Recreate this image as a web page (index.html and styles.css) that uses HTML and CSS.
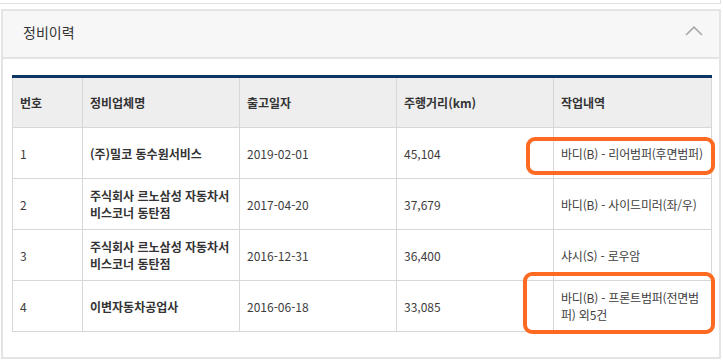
FILE: index.html
```html
<!DOCTYPE html>
<html lang="ko">
<head>
<meta charset="utf-8">
<link rel="stylesheet" href="styles.css">
</head>
<body>
<div class="prev-box"></div>
<section class="panel">
  <div class="panel-head">
    <h2 class="panel-title">정비이력</h2>
    <svg class="chevron" width="18" height="10" viewBox="0 0 18 10"><polyline points="1,9 9,1.2 17,9" fill="none" stroke="#a8a8a8" stroke-width="1.6"/></svg>
  </div>
  <div class="panel-body">
    <table class="history">
      <colgroup>
        <col class="c-no"><col class="c-shop"><col class="c-date"><col class="c-km"><col class="c-work">
      </colgroup>
      <thead>
        <tr><th>번호</th><th>정비업체명</th><th>출고일자</th><th>주행거리(km)</th><th>작업내역</th></tr>
      </thead>
      <tbody>
        <tr><td>1</td><td class="shop">(주)밀코 동수원서비스</td><td>2019-02-01</td><td>45,104</td><td class="work">바디(B) - 리어범퍼(후면범퍼)</td></tr>
        <tr><td>2</td><td class="shop">주식회사 르노삼성 자동차서비스코너 동탄점</td><td>2017-04-20</td><td>37,679</td><td class="work">바디(B) - 사이드미러(좌/우)</td></tr>
        <tr><td>3</td><td class="shop">주식회사 르노삼성 자동차서비스코너 동탄점</td><td>2016-12-31</td><td>36,400</td><td class="work">샤시(S) - 로우암</td></tr>
        <tr><td>4</td><td class="shop">이변자동차공업사</td><td>2016-06-18</td><td>33,085</td><td class="work">바디(B) - 프론트범퍼(전면범퍼) 외5건</td></tr>
      </tbody>
    </table>
  </div>
</section>
<div class="mark mark-1"></div>
<div class="mark mark-2"></div>
</body>
</html>
```
FILE: styles.css
```css
html, body {
  margin: 0;
  padding: 0;
  background: #ffffff;
}
body {
  position: relative;
  width: 723px;
  height: 364px;
  overflow: hidden;
  font-family: "Noto Sans CJK KR", "Noto Sans", sans-serif;
  color: #444;
}
.prev-box {
  width: 720px;
  height: 3px;
  border-right: 1px solid #e0e0e0;
  border-bottom: 1px solid #e0e0e0;
  box-sizing: content-box;
}
.panel {
  margin: 5px 0 0 1px;
  width: 720px;
  box-sizing: border-box;
  border: 2px solid #e4e4e4;
}
.panel-head {
  height: 46px;
  background: #f7f7f7;
  border-bottom: 2px solid #e4e4e4;
  display: flex;
  align-items: center;
  justify-content: space-between;
  padding: 0 16px 0 20px;
}
.panel-title {
  margin: 0;
  font-size: 14px;
  font-weight: 400;
  color: #333;
  line-height: 20px;
  position: relative;
  top: -2px;
}
.chevron {
  display: block;
  position: relative;
  top: -3px;
}
.panel-body {
  padding: 16px 7px 25px 9px;
}
.history {
  border-collapse: separate;
  border-spacing: 0;
  table-layout: fixed;
  width: 700px;
  border-top: 3px solid #0c3662;
  font-size: 12px;
}
.c-no { width: 71px; }
.c-shop { width: 157px; }
.c-date { width: 157px; }
.c-km { width: 157px; }
.c-work { width: 158px; }
.history th,
.history td {
  text-align: left;
  vertical-align: middle;
  padding: 0 5px 0 7px;
  border-right: 1px solid #d7d7d7;
  border-bottom: 1px solid #d7d7d7;
  line-height: 17px;
}
.history th:first-child,
.history td:first-child {
  border-left: 1px solid #d7d7d7;
}
.history th {
  height: 49px;
  background: #eeeeee;
  font-weight: 700;
  color: #333;
}
.history td {
  height: 50px;
  color: #3d3d3d;
}
.history td.shop {
  font-weight: 700;
  color: #333;
}
.history td.work {
  padding-right: 0;
  letter-spacing: -0.2px;
}
.mark {
  position: absolute;
  border: 4px solid #ff6a22;
  border-radius: 9px;
  box-sizing: border-box;
}
.mark-1 {
  left: 526px;
  top: 137px;
  width: 189px;
  height: 38px;
}
.mark-2 {
  left: 523px;
  top: 272px;
  width: 192px;
  height: 62px;
}
```
